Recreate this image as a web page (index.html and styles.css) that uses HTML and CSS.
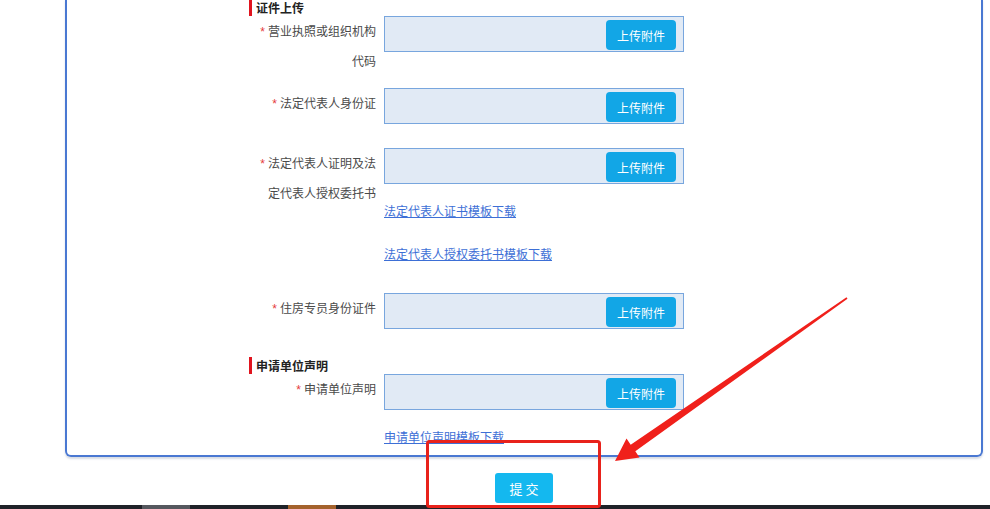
FILE: index.html
```html
<!DOCTYPE html>
<html>
<head>
    <meta http-equiv="Content-Type" content="text/html; charset=utf-8"/>
    <title>证件上传</title>
    <link rel="stylesheet" href="styles.css">
</head>

<body>
<div class="panel">
    <div class="sec-title">证件上传</div>
    <div class="row">
        <div class="label"><span class="star">*</span>营业执照或组织机构代码</div>
        <div class="field">
            <div class="upload"><button class="btn-up">上传附件</button></div>
        </div>
    </div>
    <div class="row">
        <div class="label"><span class="star">*</span>法定代表人身份证</div>
        <div class="field">
            <div class="upload"><button class="btn-up">上传附件</button></div>
        </div>
    </div>
    <div class="row row-links">
        <div class="label"><span class="star">*</span>法定代表人证明及法定代表人授权委托书</div>
        <div class="field">
            <div class="upload"><button class="btn-up">上传附件</button></div>
            <div class="tips">
                <a href="#">法定代表人证书模板下载</a>
                <a href="#">法定代表人授权委托书模板下载</a>
            </div>
        </div>
    </div>
    <div class="row">
        <div class="label"><span class="star">*</span>住房专员身份证件</div>
        <div class="field">
            <div class="upload"><button class="btn-up">上传附件</button></div>
        </div>
    </div>

    <div class="sec-title sec-second">申请单位声明</div>
    <div class="row row-last">
        <div class="label"><span class="star">*</span>申请单位声明</div>
        <div class="field">
            <div class="upload"><button class="btn-up">上传附件</button></div>
            <div class="tips">
                <a href="#">申请单位声明模板下载</a>
            </div>
        </div>
    </div>
</div>

<div class="submit-box">
    <button class="btn-submit">提 交</button>
</div>

<div class="taskbar">
    <span class="task task-gray"></span>
    <span class="task task-orange"></span>
</div>

<!-- 标注 -->
<svg class="mark" width="990" height="509" viewBox="0 0 990 509">
    <rect x="427.5" y="441.5" width="172" height="65" rx="2" fill="none" stroke="#e8221b" stroke-width="3"/>
    <polygon fill="#f0201b" points="615,461 626.5,438.5 630.7,444.7 846.5,297.3 847.5,298.7 635.3,451.3 639.5,457.5"/>
</svg>
</body>
</html>
```

FILE: styles.css
```css
* {
    margin: 0;
    padding: 0;
}

body {
    font-family: "Noto Sans CJK SC", "Liberation Sans", sans-serif;
    font-size: 12px;
    color: #555;
    background: #fff;
}

.panel {
    width: 918px;
    box-sizing: border-box;
    margin: -1px 0 0 65px;
    padding: 0 0 8px 182px;
    border: 2px solid #4a78d2;
    border-top: none;
    border-radius: 0 0 6px 6px;
    box-shadow: 0 2px 2px rgba(60, 80, 120, 0.2);
}

.sec-title {
    border-left: 3px solid #e0141e;
    padding-left: 4px;
    height: 17px;
    line-height: 17px;
    font-weight: bold;
    color: #222;
}

.sec-second {
    margin-top: 16px;
}

.row {
    display: flex;
    gap: 8px;
    min-height: 48px;
    margin-bottom: 12px;
    padding-left: 9px;
}

.row-links {
    margin-bottom: 29px;
}

.row-last {
    margin-bottom: 0;
}

.label {
    width: 118px;
    line-height: 30px;
    text-align: right;
    color: #4a4a4a;
}

.star {
    font-family: "Liberation Sans", sans-serif;
    line-height: 1;
    color: #e53b3b;
    margin-right: 3px;
}

.upload {
    width: 300px;
    height: 36px;
    box-sizing: border-box;
    border: 1px solid #78a6de;
    background: #e1eaf5;
    display: flex;
    justify-content: flex-end;
    align-items: center;
    padding: 2px 7px 0 0;
}

.btn-up {
    width: 70px;
    height: 30px;
    border: none;
    border-radius: 4px;
    background: #12a6e6;
    color: #fff;
    font-family: inherit;
    font-size: 12px;
}

.tips a {
    display: block;
    margin-top: 17px;
    line-height: 20px;
    color: #3d6fd6;
    text-decoration: underline;
}

.tips a + a {
    margin-top: 23px;
}

.submit-box {
    width: 918px;
    margin-left: 65px;
    padding: 16px 0 2px;
    text-align: center;
}

.btn-submit {
    width: 58px;
    height: 30px;
    border: none;
    border-radius: 3px;
    background: #14b8ef;
    color: #fff;
    font-family: inherit;
    font-size: 13px;
    display: block;
    margin: 0 auto;
}

.taskbar {
    height: 4px;
    background: #1f2228;
    display: flex;
    overflow: hidden;
}

.task {
    height: 4px;
    width: 48px;
}

.task-gray {
    margin-left: 142px;
    background: #55585e;
}

.task-orange {
    margin-left: 98px;
    background: #a4622c;
}

.mark {
    position: absolute;
    left: 0;
    top: 0;
    pointer-events: none;
}
```
